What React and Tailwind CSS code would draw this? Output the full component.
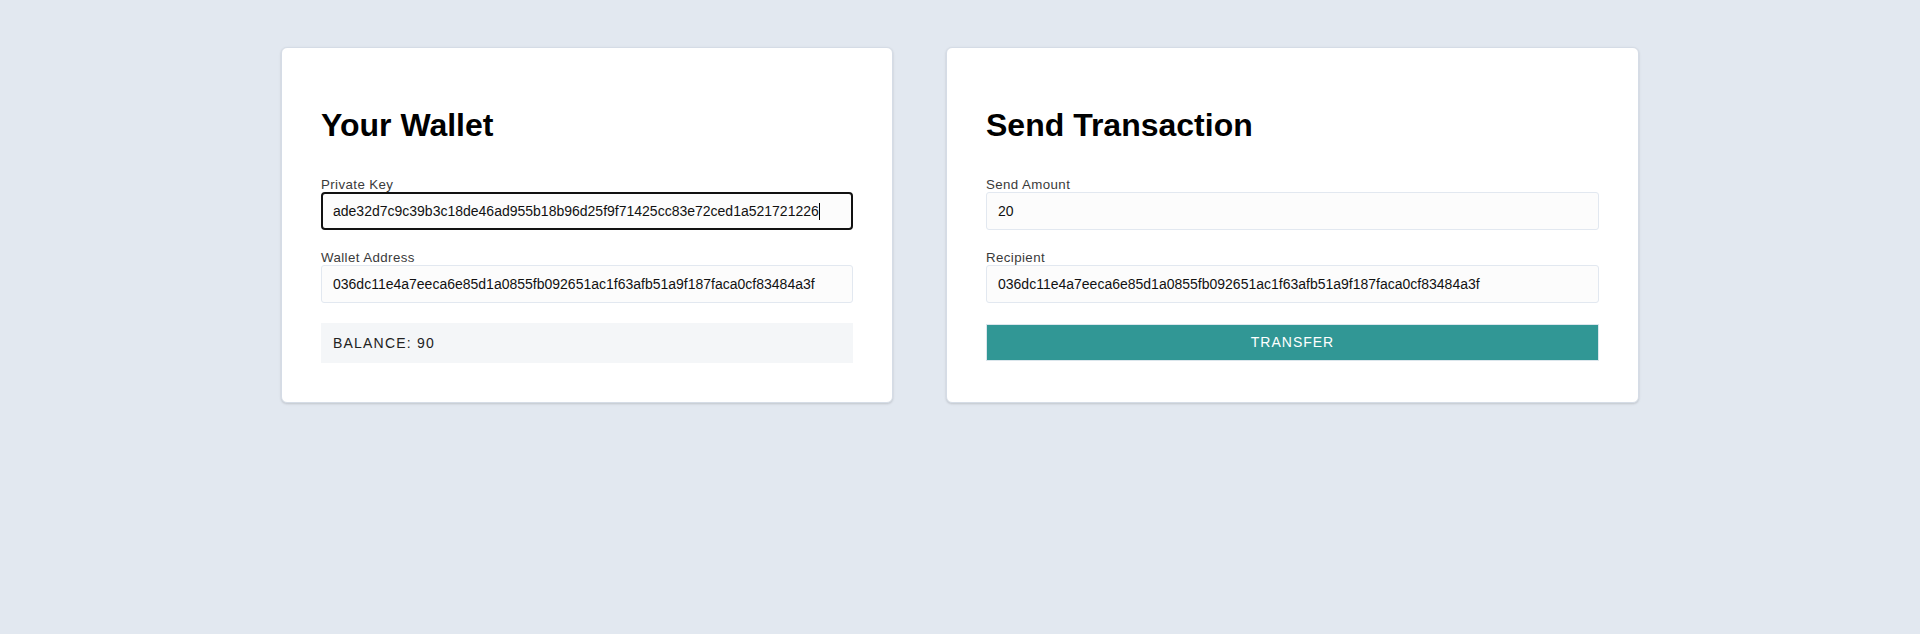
const PRIVATE_KEY = 'ade32d7c9c39b3c18de46ad955b18b96d25f9f71425cc83e72ced1a521721226';
const ADDRESS = '036dc11e4a7eeca6e85d1a0855fb092651ac1f63afb51a9f187faca0cf83484a3f';

function Field({ label, value, focused }) {
  return (
    <label className="flex flex-col mb-5 text-[13.3px] leading-[15px] tracking-[0.4px] text-[#3a3a3a]">
      {label}
      {focused ? (
        <div className="flex items-center h-[38px] pl-[10px] rounded-[4px] border-2 border-[#111] bg-[#fcfcfc] text-[14px] tracking-normal text-[#111] whitespace-nowrap overflow-hidden">
          {value}
          <span className="inline-block w-px h-[17px] bg-black" />
        </div>
      ) : (
        <input
          readOnly
          value={value}
          className="h-[38px] pl-[11px] rounded-[3px] border border-[#e2e8f0] bg-[#fcfcfc] text-[14px] tracking-normal text-[#111] outline-none"
        />
      )}
    </label>
  );
}

function Card({ title, width, children }) {
  return (
    <div
      className={`flex flex-col ${width} bg-white rounded-md border border-[#d5dce6] px-[39px] pt-[59px] pb-[39px] shadow-[0_1px_3px_0_rgba(0,0,0,0.1),0_1px_2px_0_rgba(0,0,0,0.06)]`}
    >
      <h1 className="text-[32px] leading-[37px] font-bold text-black mb-[33px]">{title}</h1>
      {children}
    </div>
  );
}

export default function App() {
  return (
    <div className="min-h-screen bg-[#e2e8f0] pt-[47px] font-['Liberation_Sans',Arial,sans-serif]">
      <div className="flex justify-center items-stretch gap-[53px]">
        <Card title="Your Wallet" width="w-[612px]">
          <Field label="Private Key" value={PRIVATE_KEY} focused />
          <Field label="Wallet Address" value={ADDRESS} />
          <div className="flex items-center h-10 px-3 bg-[#f4f6f8] text-[14px] tracking-[1.2px] text-[#222] uppercase">
            Balance: 90
          </div>
        </Card>
        <Card title="Send Transaction" width="w-[693px]">
          <Field label="Send Amount" value="20" />
          <Field label="Recipient" value={ADDRESS} />
          <button className="h-[37px] mt-[1px] bg-[#319795] border border-[#dbe6ec] text-white text-[14px] tracking-[1px] uppercase">
            Transfer
          </button>
        </Card>
      </div>
    </div>
  );
}
